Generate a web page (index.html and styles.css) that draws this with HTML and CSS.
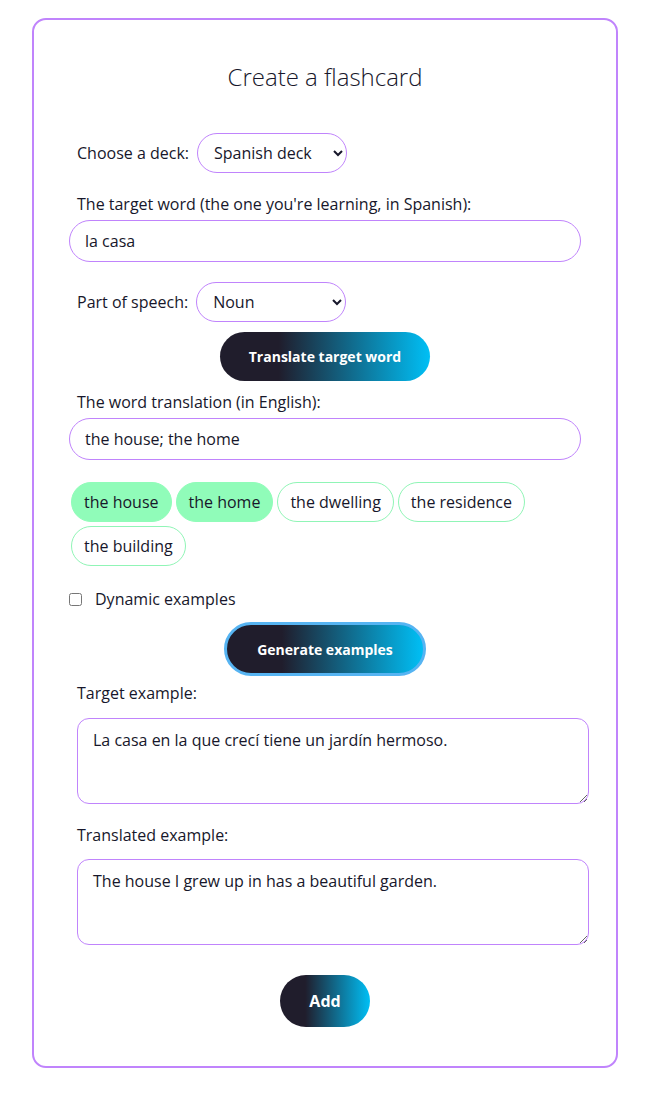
FILE: index.html
```html
<!DOCTYPE html>
<html lang="en">
<head>
<meta charset="utf-8">
<title>Create a flashcard</title>
<link rel="stylesheet" href="styles.css">
</head>
<body>
<div class="card">
  <h1 class="title">Create a flashcard</h1>

  <div class="inline-row">
    <label class="label" for="deck">Choose a deck:</label>
    <select id="deck" class="select"><option>Spanish deck</option></select>
  </div>

  <label class="label block-label" for="target">The target word (the one you're learning, in Spanish):</label>
  <input id="target" class="text-input" type="text" value="la casa">

  <div class="inline-row pos-row">
    <label class="label" for="pos">Part of speech:</label>
    <select id="pos" class="select"><option>Noun</option></select>
  </div>

  <div class="btn-wrap translate-wrap">
    <button class="btn btn-translate">Translate target word</button>
  </div>

  <label class="label block-label tr-label" for="translation">The word translation (in English):</label>
  <input id="translation" class="text-input" type="text" value="the house; the home">

  <div class="chips">
    <span class="chip chip-on">the house</span>
    <span class="chip chip-on">the home</span>
    <span class="chip">the dwelling</span>
    <span class="chip">the residence</span>
    <span class="chip">the building</span>
  </div>

  <div class="check-row">
    <input type="checkbox" id="dyn" class="checkbox">
    <label for="dyn" class="label">Dynamic examples</label>
  </div>

  <div class="btn-wrap gen-wrap">
    <button class="btn btn-generate">Generate examples</button>
  </div>

  <label class="label block-label ex-label" for="tex">Target example:</label>
  <textarea id="tex" class="textarea">La casa en la que crecí tiene un jardín hermoso.</textarea>

  <label class="label block-label ex-label2" for="trx">Translated example:</label>
  <textarea id="trx" class="textarea">The house I grew up in has a beautiful garden.</textarea>

  <div class="btn-wrap add-wrap">
    <button class="btn btn-add">Add</button>
  </div>
</div>
</body>
</html>
```

FILE: styles.css
```css
* { box-sizing: border-box; }

body {
  margin: 0;
  background: #ffffff;
  font-family: "Open Sans", "Noto Sans", sans-serif;
  color: #17172b;
  font-size: 16px;
}

.card {
  width: 586px;
  margin: 18px 0 0 32px;
  border: 2px solid #c084fc;
  border-radius: 14px;
  padding: 0 35px 39px;
}

.title {
  margin: 41px 0 40px;
  font-size: 24px;
  font-weight: 300;
  line-height: 32px;
  text-align: center;
  color: #17172b;
}

.label {
  font-size: 16px;
  line-height: 22px;
  color: #17172b;
}

.inline-row {
  display: flex;
  align-items: center;
  gap: 8px;
  margin-left: 8px;
  height: 40px;
}

.pos-row { margin-top: 20px; }

.select {
  width: 150px;
  height: 40px;
  border: 1px solid #c084fc;
  border-radius: 20px;
  padding: 0 8px 0 12px;
  font-family: "Open Sans", "Noto Sans", sans-serif;
  font-size: 16px;
  color: #17172b;
  background: #ffffff;
}

.block-label {
  display: block;
  margin: 20px 0 5px 8px;
}

.tr-label { margin-top: 10px; }

.text-input {
  display: block;
  width: 512px;
  height: 42px;
  border: 1px solid #c084fc;
  border-radius: 21px;
  padding: 0 15px;
  font-family: "Open Sans", "Noto Sans", sans-serif;
  font-size: 16px;
  color: #17172b;
  background: #ffffff;
}

.btn-wrap {
  display: flex;
  justify-content: center;
}

.translate-wrap { margin-top: 10px; }
.gen-wrap { margin-top: 12px; }
.add-wrap { margin-top: 30px; }

.btn {
  border: none;
  color: #ffffff;
  font-family: "Open Sans", "Noto Sans", sans-serif;
  font-weight: 700;
  background: linear-gradient(to right, #201d2c 28%, #00bff5 100%);
  cursor: pointer;
}

.btn-translate {
  width: 210px;
  height: 49px;
  border-radius: 25px;
  font-size: 14px;
}

.btn-generate {
  width: 202px;
  height: 54px;
  border-radius: 27px;
  font-size: 14px;
  border: 3px solid #56b4f2;
}

.btn-add {
  width: 90px;
  height: 52px;
  border-radius: 26px;
  font-size: 16px;
}

.chips {
  display: flex;
  flex-wrap: wrap;
  gap: 4px;
  margin-top: 22px;
  padding-left: 2px;
}

.chip {
  display: inline-flex;
  align-items: center;
  height: 40px;
  padding: 0 12px;
  border: 1px solid #90f5b6;
  border-radius: 20px;
  font-size: 16px;
  color: #17172b;
  background: #ffffff;
}

.chip-on {
  background: #90fcb9;
  border-color: #90fcb9;
}

.check-row {
  display: flex;
  align-items: center;
  height: 22px;
  margin-top: 22px;
}

.checkbox {
  width: 13px;
  height: 13px;
  margin: 0 13px 0 0;
}

.ex-label { margin-top: 6px; margin-bottom: 14px; }
.ex-label2 { margin-top: 20px; margin-bottom: 13px; }

.textarea {
  display: block;
  width: 512px;
  height: 86px;
  margin-left: 8px;
  border: 1px solid #c084fc;
  border-radius: 12px;
  padding: 10px 15px;
  font-family: "Open Sans", "Noto Sans", sans-serif;
  font-size: 16px;
  line-height: 22px;
  color: #17172b;
  resize: vertical;
}
```
